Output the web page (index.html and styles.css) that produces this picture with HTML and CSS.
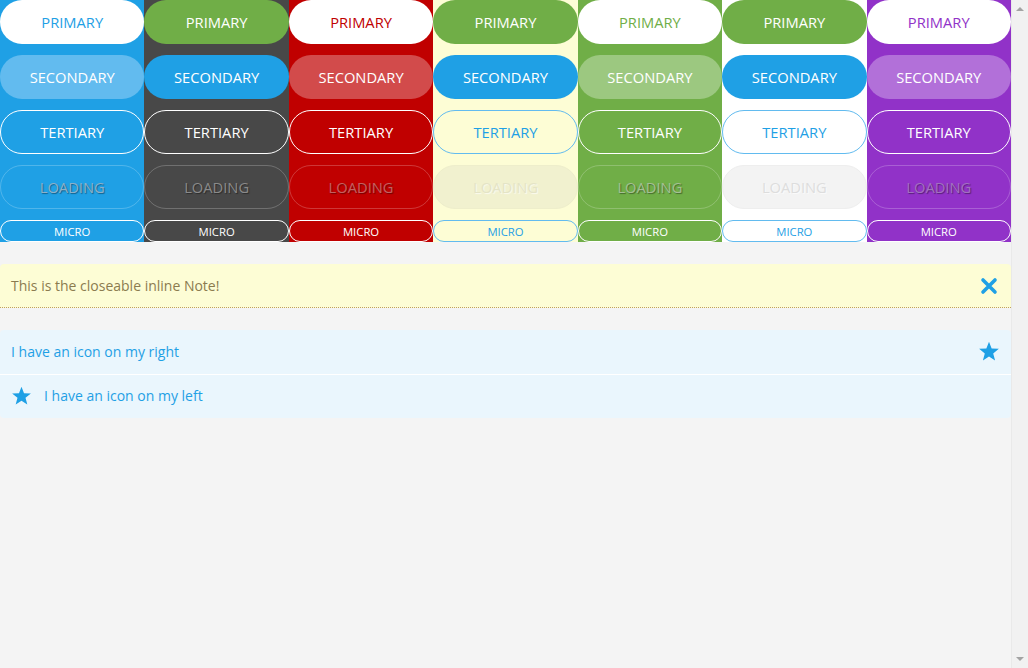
FILE: index.html
```html
<!DOCTYPE html>
<html>
<head>
<meta charset="utf-8">
<link rel="stylesheet" href="styles.css">
</head>
<body>
<div class="page">
  <main class="main">
    <div class="swatches">
      <div class="col c-blue">
        <button class="btn primary">PRIMARY</button>
        <button class="btn secondary">SECONDARY</button>
        <button class="btn tertiary">TERTIARY</button>
        <button class="btn loading">LOADING</button>
        <button class="btn micro">MICRO</button>
      </div>
      <div class="col c-dark">
        <button class="btn primary">PRIMARY</button>
        <button class="btn secondary">SECONDARY</button>
        <button class="btn tertiary">TERTIARY</button>
        <button class="btn loading">LOADING</button>
        <button class="btn micro">MICRO</button>
      </div>
      <div class="col c-red">
        <button class="btn primary">PRIMARY</button>
        <button class="btn secondary">SECONDARY</button>
        <button class="btn tertiary">TERTIARY</button>
        <button class="btn loading">LOADING</button>
        <button class="btn micro">MICRO</button>
      </div>
      <div class="col c-yellow">
        <button class="btn primary">PRIMARY</button>
        <button class="btn secondary">SECONDARY</button>
        <button class="btn tertiary">TERTIARY</button>
        <button class="btn loading">LOADING</button>
        <button class="btn micro">MICRO</button>
      </div>
      <div class="col c-green">
        <button class="btn primary">PRIMARY</button>
        <button class="btn secondary">SECONDARY</button>
        <button class="btn tertiary">TERTIARY</button>
        <button class="btn loading">LOADING</button>
        <button class="btn micro">MICRO</button>
      </div>
      <div class="col c-white">
        <button class="btn primary">PRIMARY</button>
        <button class="btn secondary">SECONDARY</button>
        <button class="btn tertiary">TERTIARY</button>
        <button class="btn loading">LOADING</button>
        <button class="btn micro">MICRO</button>
      </div>
      <div class="col c-purple">
        <button class="btn primary">PRIMARY</button>
        <button class="btn secondary">SECONDARY</button>
        <button class="btn tertiary">TERTIARY</button>
        <button class="btn loading">LOADING</button>
        <button class="btn micro">MICRO</button>
      </div>
    </div>

    <div class="note">
      <span class="note-text">This is the closeable inline Note!</span>
      <svg class="note-close" width="18" height="18" viewBox="0 0 18 18"><path d="M3 3 L15 15 M15 3 L3 15" stroke="#1fa0e5" stroke-width="3.6" stroke-linecap="round"/></svg>
    </div>

    <ul class="list">
      <li class="list-item">
        <span class="list-text">I have an icon on my right</span>
        <svg class="star" width="22" height="21" viewBox="0 0 24 23"><path d="M12 0.8 L14.9 8.2 L22.8 8.6 L16.6 13.6 L18.7 21.3 L12 17 L5.3 21.3 L7.4 13.6 L1.2 8.6 L9.1 8.2 Z" fill="#1fa0e5"/></svg>
      </li>
      <li class="list-item">
        <svg class="star star-left" width="21" height="20" viewBox="0 0 24 23"><path d="M12 0.8 L14.9 8.2 L22.8 8.6 L16.6 13.6 L18.7 21.3 L12 17 L5.3 21.3 L7.4 13.6 L1.2 8.6 L9.1 8.2 Z" fill="#1fa0e5"/></svg>
        <span class="list-text">I have an icon on my left</span>
      </li>
    </ul>
  </main>
  <aside class="scrollbar">
    <span class="arrow up"></span>
    <span class="arrow down"></span>
  </aside>
</div>
</body>
</html>
```

FILE: styles.css
```css
* { box-sizing: border-box; }
html, body { margin: 0; padding: 0; }
body {
  font-family: "Open Sans", "Liberation Sans", sans-serif;
  background: #f4f4f4;
}
.page {
  display: flex;
  height: 668px;
  overflow: hidden;
}
.main {
  flex: 1;
  background: #f4f4f4;
}
.scrollbar {
  width: 17px;
  background: #f1f1f1;
  border-left: 1px solid #e9e9e9;
  display: flex;
  flex-direction: column;
  justify-content: space-between;
  align-items: center;
  padding: 7px 0 7px;
}
.arrow {
  width: 0; height: 0;
  border-left: 4px solid transparent;
  border-right: 4px solid transparent;
}
.arrow.up { border-bottom: 4px solid #a3a3a3; }
.arrow.down { border-top: 4px solid #a3a3a3; }

.swatches {
  display: flex;
}
.col {
  flex: 1 1 0;
  min-width: 0;
  display: flex;
  flex-direction: column;
  gap: 11px;
  height: 242px;
}
.btn {
  display: block;
  width: 100%;
  height: 44px;
  border-radius: 22px;
  border: 1px solid transparent;
  font-family: "Open Sans", "Liberation Sans", sans-serif;
  font-size: 14.7px;
  padding: 0;
  margin: 0;
  background: transparent;
  color: #fff;
  cursor: pointer;
}
.btn.micro {
  height: 22px;
  border-radius: 11px;
  font-size: 11.3px;
  border-color: #fff;
}
.btn.tertiary { border-color: #fff; }
.btn.loading {
  border-color: rgba(255,255,255,0.22);
  text-shadow: 1px 1px 1px rgba(0,0,0,0.4);
}

/* blue */
.c-blue { background: #1fa0e5; }
.c-blue .primary { background: #fff; color: #1fa0e5; }
.c-blue .secondary { background: #62bbef; }
.c-blue .loading { color: #8eb0c8; }

/* dark */
.c-dark { background: #484848; }
.c-dark .primary { background: #70ae47; }
.c-dark .secondary { background: #1fa0e5; }
.c-dark .loading { color: #8a8a8a; }

/* red */
.c-red { background: #c00000; }
.c-red .primary { background: #fff; color: #c00000; }
.c-red .secondary { background: #d24b4b; }
.c-red .loading { color: #c46060; }

/* yellow */
.c-yellow { background: #fdfdd5; }
.c-yellow .primary { background: #70ae47; }
.c-yellow .secondary { background: #1fa0e5; }
.c-yellow .tertiary { border-color: #62bbef; color: #1fa0e5; }
.c-yellow .loading { background: #f1f1cf; border-color: #eeeecb; color: #e4e4c6; text-shadow: 1px 1px 1px rgba(255,255,255,0.7); }
.c-yellow .micro { border-color: #62bbef; color: #1fa0e5; }

/* green */
.c-green { background: #70ae47; }
.c-green .primary { background: #fff; color: #70ae47; }
.c-green .secondary { background: #9cc880; }
.c-green .loading { color: #a4c094; }

/* white */
.c-white { background: #fff; }
.c-white .primary { background: #70ae47; }
.c-white .secondary { background: #1fa0e5; }
.c-white .tertiary { border-color: #62bbef; color: #1fa0e5; }
.c-white .loading { background: #f3f3f3; border-color: #eeeeee; color: #dddddd; text-shadow: 1px 1px 1px rgba(255,255,255,0.7); }
.c-white .micro { border-color: #62bbef; color: #1fa0e5; }

/* purple */
.c-purple { background: #9132c8; }
.c-purple .primary { background: #fff; color: #9132c8; }
.c-purple .secondary { background: #b270d9; }
.c-purple .loading { color: #a270c0; }

.note {
  margin-top: 22px;
  height: 44px;
  background: #fdfdd5;
  border-bottom: 1px dotted #c0a060;
  border-radius: 4px 4px 0 0;
  display: flex;
  align-items: center;
  justify-content: space-between;
  padding: 0 13px 0 11px;
}
.note-text {
  font-size: 14px;
  color: #8b7b4f;
}
.note-close { display: block; }

.list {
  list-style: none;
  margin: 22px 0 0;
  padding: 0;
  background: #eaf6fd;
  border-radius: 4px;
  overflow: hidden;
}
.list-item {
  height: 44px;
  display: flex;
  align-items: center;
  justify-content: space-between;
  padding: 0 11px 2px 11px;
  color: #1fa0e5;
  font-size: 14px;
}
.list-item + .list-item {
  border-top: 1px solid #fff;
  justify-content: flex-start;
  padding-bottom: 2px;
}
.star { display: block; }
.star-left { margin-right: 12px; }
```
